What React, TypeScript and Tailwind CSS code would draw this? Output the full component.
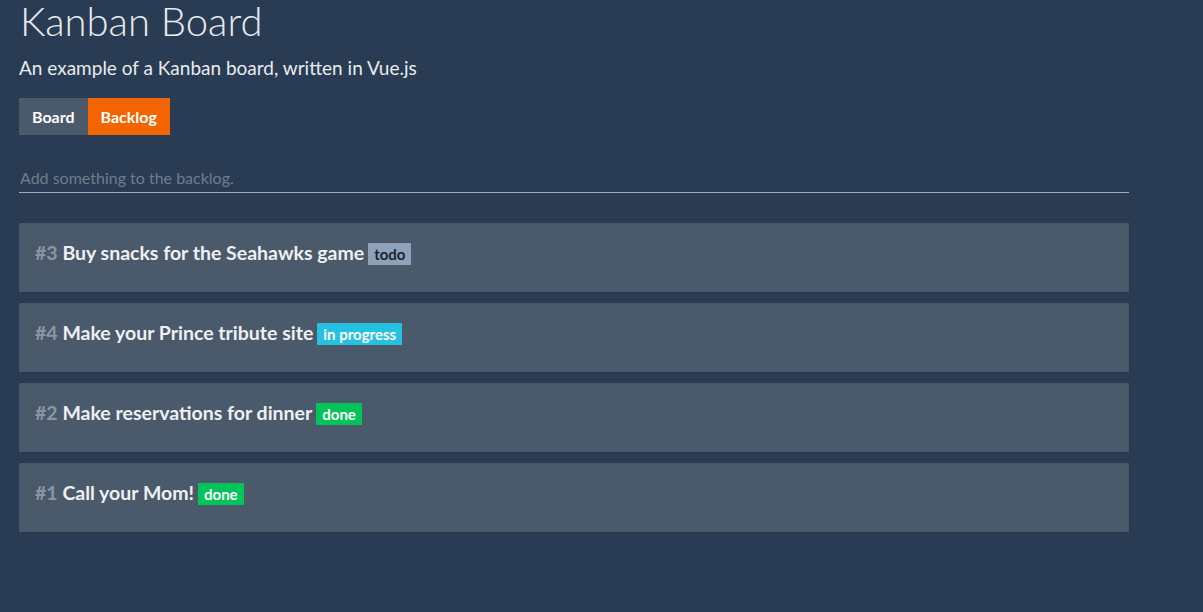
const items = [
  { id: 3, title: "Buy snacks for the Seahawks game", status: "todo" },
  { id: 4, title: "Make your Prince tribute site", status: "in progress" },
  { id: 2, title: "Make reservations for dinner", status: "done" },
  { id: 1, title: "Call your Mom!", status: "done" },
];

function Badge({ status }: { status: string }) {
  if (status === "todo") {
    return (
      <span className="ml-[4px] inline-block bg-[#8ea2ba] px-[6px] text-[15px] font-bold leading-[22px] text-[#1b2230]">
        {status}
      </span>
    );
  }
  if (status === "in progress") {
    return (
      <span className="ml-[4px] inline-block bg-[#25c1e3] px-[6px] text-[15px] font-bold leading-[22px] text-white">
        {status}
      </span>
    );
  }
  return (
    <span className="ml-[4px] inline-block bg-[#03c35b] px-[6px] text-[15px] font-bold leading-[22px] text-white">
      {status}
    </span>
  );
}

export default function App() {
  return (
    <div className="min-h-[612px] bg-[#293c53] px-[19px] pt-[1px] text-[#e6e9ee] font-['Lato','Noto_Sans',sans-serif]">
      <h1 className="pl-[1px] text-[40px] font-light leading-[40px] text-[#e8ebef]">Kanban Board</h1>
      <p className="mt-[15px] text-[19px] leading-[24px] text-[#e8ebef]">
        An example of a Kanban board, written in Vue.js
      </p>
      <div className="mt-[18px] flex">
        <button className="h-[37px] bg-[#4b5a6b] px-[13px] text-[16px] font-bold text-white">Board</button>
        <button className="h-[37px] bg-[#f26500] px-[13px] text-[16px] font-bold text-white">Backlog</button>
      </div>
      <div className="mt-[31px] w-[1110px] border-b border-[#a3adb9] pb-[2px]">
        <input
          className="w-full bg-transparent pl-[1px] text-[16px] leading-[20px] text-white outline-none placeholder:text-[#6f7d8d]"
          placeholder="Add something to the backlog."
        />
      </div>
      <div className="mt-[30px] flex w-[1110px] flex-col gap-[11px]">
        {items.map((item) => (
          <div
            key={item.id}
            className="h-[69px] border border-[#44546a] bg-[#4a5a6b] px-[15px] pt-[17px]"
          >
            <div className="text-[19.5px] font-bold leading-[24px]">
              <span className="text-[#8c97a4]">#{item.id}</span>{" "}
              <span className="text-[#eef0f3]">{item.title}</span>
              <Badge status={item.status} />
            </div>
          </div>
        ))}
      </div>
    </div>
  );
}
